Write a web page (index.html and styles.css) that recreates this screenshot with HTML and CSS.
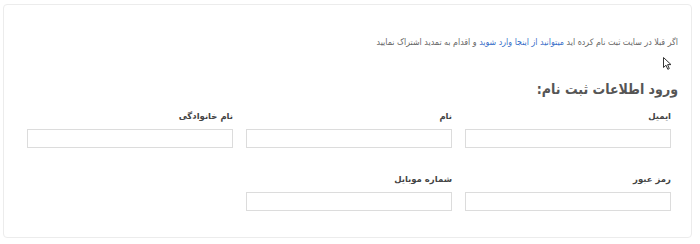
FILE: index.html
```html
<!DOCTYPE html>
<html lang="fa" dir="rtl">
<head>
<meta charset="utf-8">
<link rel="stylesheet" href="styles.css">
</head>
<body>
<div class="card">
  <p class="intro">اگر قبلا در سایت ثبت نام کرده اید <a href="#">میتوانید از اینجا وارد شوید</a> و اقدام به تمدید اشتراک نمایید</p>
  <h2 class="title">ورود اطلاعات ثبت نام:</h2>
  <div class="grid">
    <div class="field"><label>ایمیل</label><div class="input"></div></div>
    <div class="field"><label>نام</label><div class="input"></div></div>
    <div class="field"><label>نام خانوادگی</label><div class="input"></div></div>
    <div class="field"><label>رمز عبور</label><div class="input"></div></div>
    <div class="field"><label>شماره موبایل</label><div class="input"></div></div>
  </div>
  <svg class="cursor" width="9" height="13" viewBox="0 0 9 13"><path d="M0.5 0.5 L0.5 10.5 L3 8.2 L4.8 12.3 L6.3 11.6 L4.6 7.6 L8 7.6 Z" fill="#fff" stroke="#333" stroke-width="1"/></svg>
</div>
</body>
</html>
```
FILE: styles.css
```css
html, body { margin: 0; padding: 0; background: #fff; }
body { font-family: "DejaVu Sans Condensed", "DejaVu Sans", sans-serif; color: #555; }
.card {
  position: relative;
  margin: 4px 8px 0 3px;
  width: 689px;
  height: 234px;
  border: 1px solid #ececec;
  border-radius: 4px;
  box-sizing: border-box;
  padding: 0 13px 0 16px;
}
.intro {
  margin: 30px 0 0 0;
  font-size: 8.8px;
  line-height: 14px;
  color: #666;
}
.intro a { color: #3b6fc9; text-decoration: none; }
.title {
  margin: 30px 0 0 0;
  font-size: 14px;
  line-height: 20px;
  font-weight: bold;
  color: #555;
}
.grid {
  display: grid;
  grid-template-columns: repeat(3, 206px);
  column-gap: 13px;
  row-gap: 25px;
  margin-top: 11px;
  padding-right: 7px;
}
.field { display: flex; flex-direction: column; }
.field label {
  font-family: "DejaVu Sans", sans-serif;
  font-size: 8.5px;
  font-weight: bold;
  color: #444;
  line-height: 12px;
  margin-bottom: 7px;
}
.input {
  height: 19px;
  border: 1px solid #dcdcdc;
  box-sizing: border-box;
  background: #fff;
}
.cursor { position: absolute; left: 659px; top: 52px; }
```
